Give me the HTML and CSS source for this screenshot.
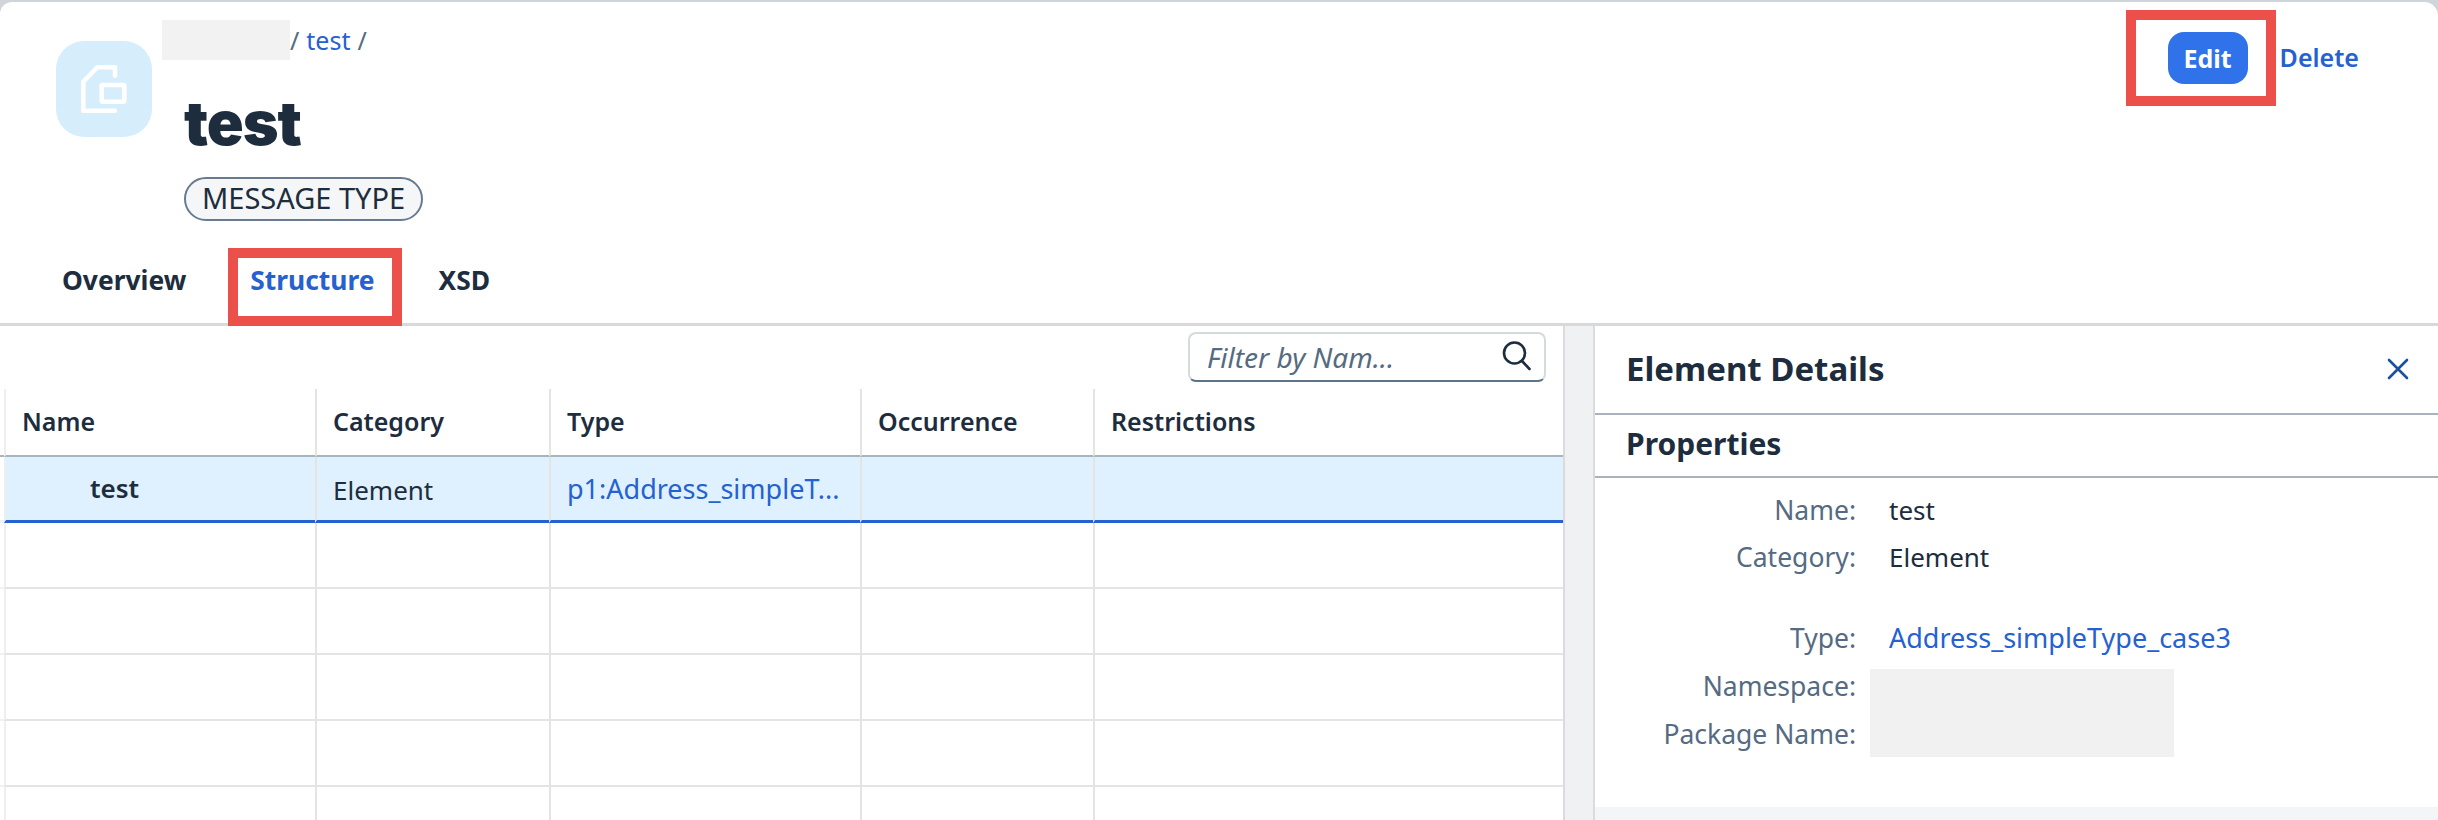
FILE: index.html
```html
<!DOCTYPE html>
<html lang="en">
<head>
<meta charset="UTF-8">
<title>test</title>
<link rel="stylesheet" href="styles.css">
</head>
<body>
<div class="page">
    <header class="head">
        <div class="head-top">
            <div class="obj-icon">
                <svg width="96" height="96" viewBox="0 0 96 96" fill="none" stroke="#fff" stroke-width="4.5" stroke-linecap="round" stroke-linejoin="round">
                    <path d="M59 34.7V26.3H41.3L27.3 40.7V69.7H59"/>
                    <rect x="45.7" y="44" width="22.6" height="16.7" rx="1"/>
                </svg>
            </div>
            <div class="head-text">
                <div class="crumbs"><span class="mask mask-crumb"></span><span class="sep">/</span><a class="link">test</a><span class="sep">/</span></div>
                <h1 class="title">test</h1>
                <span class="chip">MESSAGE TYPE</span>
            </div>
            <div class="actions">
                <button class="btn-edit">Edit</button>
                <a class="link btn-delete">Delete</a>
            </div>
        </div>
        <nav class="tabs">
            <a class="tab">Overview</a>
            <a class="tab tab-on">Structure</a>
            <a class="tab">XSD</a>
        </nav>
    </header>

    <div class="body">
        <section class="left">
            <div class="toolbar">
                <div class="search">
                    <span class="search-text">Filter by Nam...</span>
                    <svg width="32" height="34" viewBox="0 0 32 34" fill="none" stroke="#1d2d3e" stroke-width="2.6" stroke-linecap="round"><circle cx="13.5" cy="13" r="10.5"/><path d="M21 21L28.5 29"/></svg>
                </div>
            </div>
            <table class="grid">
                <colgroup><col class="c0"><col class="c1"><col class="c2"><col class="c3"><col class="c4"><col class="c5"></colgroup>
                <thead>
                    <tr><th class="gut"></th><th>Name</th><th>Category</th><th>Type</th><th>Occurrence</th><th>Restrictions</th></tr>
                </thead>
                <tbody>
                    <tr class="sel"><td class="gut"></td><td class="node">test</td><td class="plain">Element</td><td><a class="link">p1:Address_simpleT...</a></td><td></td><td></td></tr>
                    <tr><td class="gut"></td><td></td><td></td><td></td><td></td><td></td></tr>
                    <tr><td class="gut"></td><td></td><td></td><td></td><td></td><td></td></tr>
                    <tr><td class="gut"></td><td></td><td></td><td></td><td></td><td></td></tr>
                    <tr><td class="gut"></td><td></td><td></td><td></td><td></td><td></td></tr>
                    <tr><td class="gut"></td><td></td><td></td><td></td><td></td><td></td></tr>
                </tbody>
            </table>
        </section>
        <div class="splitter"></div>
        <aside class="panel">
            <div class="panel-head">
                <h2 class="panel-title">Element Details</h2>
                <svg class="close" width="22" height="22" viewBox="0 0 22 22" stroke="#1d4f9f" stroke-width="2.6" stroke-linecap="round"><path d="M2 2L20 20M20 2L2 20"/></svg>
            </div>
            <h3 class="panel-sub">Properties</h3>
            <div class="form">
                <span class="lbl">Name:</span><span class="val">test</span>
                <span class="lbl">Category:</span><span class="val">Element</span>
                <span class="lbl">Type:</span><a class="link val">Address_simpleType_case3</a>
                <span class="lbl">Namespace:</span><span class="mask mask-form"></span>
                <span class="lbl">Package Name:</span>
            </div>
            <div class="panel-foot"></div>
        </aside>
    </div>

    <div class="mark mark-edit"></div>
    <div class="mark mark-tab"></div>
</div>
</body>
</html>
```

FILE: styles.css
```css
*{margin:0;padding:0;box-sizing:border-box;}
html,body{height:820px;overflow:hidden;}
body{background:#d0d5da;font-family:"Noto Sans",sans-serif;font-size:26px;color:#1d2d3e;}
a{text-decoration:none;}
.link{color:#2561d1;}
.mask{display:block;background:#f2f2f2;}

.page{position:relative;height:818px;margin-top:2px;background:#fff;border-radius:12px 14px 0 0;overflow:hidden;}

/* header */
.head{height:324px;border-bottom:3px solid #d9d9d9;}
.head-top{display:flex;height:236px;padding-left:56px;padding-right:79px;}
.obj-icon{width:96px;height:96px;margin-top:39px;background:#d6eefc;border-radius:28px;}
.head-text{margin-left:10px;padding-top:18px;}
.crumbs{display:flex;align-items:center;height:40px;font-size:25px;line-height:40px;}
.mask-crumb{width:128px;height:40px;}
.sep{color:#556b82;}
.crumbs .sep:nth-child(2){margin-right:7px;}
.crumbs .sep:last-child{margin-left:7px;}
.title{margin:30px 0 0 22px;font-family:Inter,sans-serif;font-size:61px;font-weight:900;line-height:66px;letter-spacing:-1px;}
.chip{display:block;margin:21px 0 0 22px;width:239px;height:44px;padding-left:16px;border:2px solid #677b90;border-radius:22px;background:#f5f6f7;font-size:29px;line-height:38px;white-space:nowrap;}
.actions{display:flex;align-items:flex-start;margin-left:auto;}
.btn-edit{width:80px;height:52px;margin-top:30px;border:0;border-radius:16px;background:#2f72ea;color:#fff;font-family:"Noto Sans",sans-serif;font-size:25px;font-weight:700;}
.btn-delete{margin:36px 0 0 32px;font-size:25px;font-weight:600;line-height:38px;}
.tabs{display:flex;gap:64px;padding:24px 0 0 62px;}
.tab{font-size:26.4px;font-weight:700;line-height:36px;color:#1d2d3e;}
.tab-on{color:#2561d1;}

/* main area */
.body{display:flex;height:494px;}
.left{width:1563px;overflow:hidden;}
.toolbar{display:flex;justify-content:flex-end;height:63px;padding:6px 17px 0 0;}
.search{display:flex;align-items:center;justify-content:space-between;width:358px;height:50px;padding:0 11px 0 17px;border:2px solid #d5dadd;border-bottom-color:#5b738b;border-radius:8px;background:#fff;}
.search-text{font-size:28px;font-style:italic;color:#556b82;}
.grid{width:1563px;table-layout:fixed;border-collapse:separate;border-spacing:0;}
.c0{width:4px;}
.c1{width:311px;}
.c2{width:234px;}
.c3{width:311px;}
.c4{width:233px;}
.c5{width:470px;}
.grid th,.grid td{height:66px;padding:0 16px;border-left:2px solid #e4e4e4;border-bottom:2px solid #e4e4e4;text-align:left;white-space:nowrap;overflow:hidden;}
.grid th{height:68px;padding-bottom:3px;font-size:25px;font-weight:600;border-bottom-color:#a9b4be;}
.grid th:nth-child(2),.grid td:nth-child(2){border-left-color:#efefef;}
.grid .gut{padding:0;border-left:0;border-bottom-color:#f2f2f2;}
.grid th.gut{border-bottom-color:#a9b4be;}
.grid .link{font-size:27px;}
.grid .plain{padding-top:2px;}
.sel td{background:#dff1fe;border-bottom:3px solid #2561d1;}
.sel td.gut{background:#fff;border-bottom-color:#f2f2f2;}
.grid .node{padding-left:84px;padding-bottom:2px;font-weight:600;}

.splitter{width:32px;background:#eff1f3;border-left:2px solid #d9dbde;border-right:2px solid #d9dbde;}

.panel{display:flex;flex-direction:column;flex:1;}
.panel-head{display:flex;align-items:center;justify-content:space-between;height:89px;padding:0 29px 2px 31px;border-bottom:2px solid #aab3bd;}
.panel-title{font-size:33px;font-weight:700;}
.panel-sub{height:63px;padding-left:31px;border-bottom:2px solid #aab3bd;font-size:30px;font-weight:700;line-height:58px;}
.form{display:grid;grid-template-columns:261px 304px;grid-template-rows:52px 47px 81px 48px 48px;column-gap:14px;flex:1;}
.lbl{grid-column:1;justify-self:end;align-self:end;color:#556b82;font-size:26.5px;line-height:40px;}
.val{grid-column:2;margin-left:19px;align-self:end;line-height:40px;white-space:nowrap;}
a.val{font-size:27px;}
.mask-form{grid-column:2;grid-row:4 / span 2;margin-top:11px;height:88px;background:#f1f1f1;}
.panel-foot{height:13px;background:#f3f5f6;}

/* annotation boxes drawn over the screenshot */
.mark{position:absolute;border:10px solid #ec504a;}
.mark-edit{left:2126px;top:8px;width:150px;height:96px;}
.mark-tab{left:228px;top:246px;width:174px;height:78px;}
```
